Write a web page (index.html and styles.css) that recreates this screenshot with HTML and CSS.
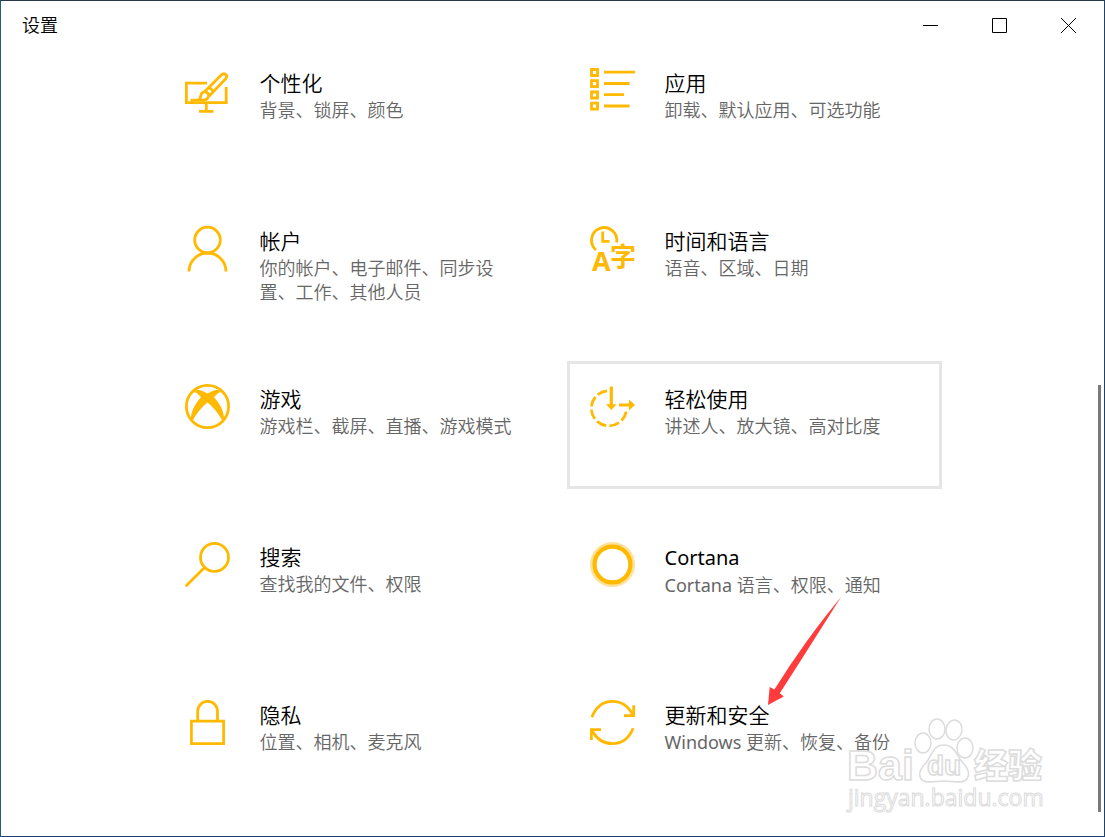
FILE: index.html
```html
<!DOCTYPE html>
<html lang="zh-CN">

<head>
    <meta charset="UTF-8" />
    <meta name="viewport" content="width=device-width, initial-scale=1.0" />
    <title>设置</title>
    <link rel="stylesheet" href="styles.css">
</head>

<body>
    <div class="window">
        <header class="titlebar">
            <h1>设置</h1>
            <div class="window-buttons">
                <button type="button" aria-label="最小化">
                    <svg viewBox="0 0 15 15"><path d="M0 7.5h15" /></svg>
                </button>
                <button type="button" aria-label="最大化">
                    <svg viewBox="0 0 15 15"><path d="M.5.5h14v14H.5z" /></svg>
                </button>
                <button type="button" aria-label="关闭">
                    <svg viewBox="0 0 15 15"><path d="M0 0l15 15M15 0L0 15" /></svg>
                </button>
            </div>
        </header>

        <main class="categories">
            <a class="tile" href="#personalization">
                <svg class="icon" viewBox="0 0 45 45">
                    <path d="M22 15.2H1.4v19.4h39.8V19" />
                    <path d="M21.3 35v8M14 43.3h14.5" />
                    <path d="M5.5 32.2H18c3.5 0 6.2-2.4 5.6-5.5-.5-2.6-3.9-3.7-6.2-2-2.4 1.8-.8 5-3.7 7.2" />
                    <path d="M19.8 23.5L36.5 6.8c3-2.8 7 1 4.2 4L24.2 28M24 19l4.5 4.5" />
                </svg>
                <div class="tile-text">
                    <h2>个性化</h2>
                    <p>背景、锁屏、颜色</p>
                </div>
            </a>

            <a class="tile" href="#apps">
                <svg class="icon" viewBox="0 0 45 45">
                    <path d="M1.5 1.5h6v6h-6zM1.5 12.7h6v6h-6zM1.5 24h6v6h-6zM1.5 35.2h6v6h-6z" />
                    <path d="M14 4.2h31M14 15.5h25.5M14 26.7h20M14 38h25.5" />
                </svg>
                <div class="tile-text">
                    <h2>应用</h2>
                    <p>卸载、默认应用、可选功能</p>
                </div>
            </a>

            <a class="tile" href="#accounts">
                <svg class="icon" viewBox="0 0 45 45">
                    <circle cx="22.5" cy="14" r="12.8" />
                    <path d="M4 45.5a18.5 18.5 0 0 1 37 0" />
                </svg>
                <div class="tile-text">
                    <h2>帐户</h2>
                    <p>你的帐户、电子邮件、同步设置、工作、其他人员</p>
                </div>
            </a>

            <a class="tile" href="#time">
                <svg class="icon" viewBox="0 0 45 45">
                    <path d="M6 24A12.7 12.7 0 1 1 26.7 16.5" />
                    <path d="M12.7 5.5v9.8h6.8" />
                    <text class="glyph-latin" x="2" y="45">A</text>
                    <text class="glyph-han" x="20" y="40">字</text>
                </svg>
                <div class="tile-text">
                    <h2>时间和语言</h2>
                    <p>语音、区域、日期</p>
                </div>
            </a>

            <a class="tile" href="#gaming">
                <svg class="icon" viewBox="0 0 45 45">
                    <circle cx="22.5" cy="22.5" r="21.1" />
                    <path class="solid" d="M7.5 8.5C10 7.5 13 9.5 16 13.3 10 20 5.5 28 6 36l1.5 1C11 30 17 23 22.5 18.5 28 23 34 30 37.5 37l1.5-1C39.5 28 35 20 29 13.3c3-3.8 6-5.8 8.5-4.8C34 4 28 6 22.5 9.5 17 6 11 4 7.5 8.5z" />
                </svg>
                <div class="tile-text">
                    <h2>游戏</h2>
                    <p>游戏栏、截屏、直播、游戏模式</p>
                </div>
            </a>

            <a class="tile hovered" href="#ease-of-access">
                <svg class="icon" viewBox="0 0 45 45">
                    <path stroke-dasharray="10.2 3.2" d="M17 6.8A17.6 17.6 0 1 0 36.3 27" />
                    <path stroke-width="3.2" d="M21.3 2.5V22M29 21h12" />
                    <path class="solid" d="M16 20.3h10.6l-5.3 5.7zM39 15.5l6 5.5-6 5.5z" />
                </svg>
                <div class="tile-text">
                    <h2>轻松使用</h2>
                    <p>讲述人、放大镜、高对比度</p>
                </div>
            </a>

            <a class="tile" href="#search">
                <svg class="icon" viewBox="0 0 45 45">
                    <circle cx="29.5" cy="15.4" r="14" />
                    <path stroke-linecap="round" d="M19.3 25.7L1.5 43.5" />
                </svg>
                <div class="tile-text">
                    <h2>搜索</h2>
                    <p>查找我的文件、权限</p>
                </div>
            </a>

            <a class="tile" href="#cortana">
                <svg class="icon" viewBox="0 0 45 45">
                    <circle class="halo" cx="22.5" cy="22.5" r="20.7" />
                    <circle class="ring" cx="22.5" cy="22.5" r="17.9" />
                </svg>
                <div class="tile-text">
                    <h2><span class="latin">Cortana</span></h2>
                    <p><span class="latin">Cortana</span> 语言、权限、通知</p>
                </div>
            </a>

            <a class="tile" href="#privacy">
                <svg class="icon" viewBox="0 0 45 45">
                    <path d="M6.4 21.1h32.2v22.5H6.4z" />
                    <path d="M12.7 21v-9.7a9.9 9.9 0 0 1 19.8 0V21" />
                </svg>
                <div class="tile-text">
                    <h2>隐私</h2>
                    <p>位置、相机、麦克风</p>
                </div>
            </a>

            <a class="tile" href="#update">
                <svg class="icon" viewBox="0 0 45 45">
                    <path d="M1.8 17.2C6 7 13.5 1.4 22.5 1.4S38.5 6.5 42.8 15" />
                    <path d="M43.7 5.3v10.4H34" />
                    <path d="M1.4 40V29.6H11" />
                    <path d="M2 30.5c4.5 8.5 11.5 13.1 20.5 13.1S39 38.5 43.2 28.3" />
                </svg>
                <div class="tile-text">
                    <h2>更新和安全</h2>
                    <p><span class="latin">Windows</span> 更新、恢复、备份</p>
                </div>
                <svg class="arrow" viewBox="0 0 80 112" aria-hidden="true">
                    <path d="M3 110L4.7 92l4.7 2.5Q41 44 76 2 49 45 14.8 98.2l4 3.2z" />
                </svg>
            </a>
        </main>

        <div class="scrollbar"></div>

        <svg class="watermark" viewBox="0 0 204 104" aria-hidden="true">
            <ellipse cx="79" cy="28" rx="8" ry="10" />
            <ellipse cx="93" cy="14" rx="8" ry="10" />
            <ellipse cx="110" cy="15" rx="8" ry="10" transform="rotate(10 110 15)" />
            <ellipse cx="121" cy="33" rx="8" ry="10" />
            <path d="M100 30c-12 0-12 12-19 19-8 8-7 18 4 18 6 0 9-1 15-1s9 1 15 1c11 0 12-10 5-18-7-7-9-19-20-19z" />
            <text class="wm-brand" x="3" y="65">Bai</text>
            <text class="wm-du" x="83" y="60">du</text>
            <text class="wm-han" x="130" y="63">经验</text>
            <text class="wm-url" x="4" y="91">jingyan.baidu.com</text>
        </svg>
    </div>
</body>

</html>
```
FILE: styles.css
```css
:root {
    --accent: #ffb900;
    --text-color: #000000;
    --muted: #666666;
    --hover-border: #e6e6e6;
}

* {
    margin: 0;
    padding: 0;
    box-sizing: border-box;
}

body {
    background: #ffffff;
    color: var(--text-color);
    font-family: "Noto Sans", "Noto Sans CJK SC", sans-serif;
}

.window {
    position: relative;
    min-height: 100vh;
    border: 1px solid #1d4468;
    border-top-color: #26384e;
    border-left-color: #1b5f7c;
    overflow: hidden;
}

.titlebar {
    display: flex;
    justify-content: space-between;
    align-items: center;
    height: 44px;
    padding: 4px 1px 0 21px;
}

.titlebar h1 {
    font-size: 18px;
    font-weight: 350;
    line-height: 24px;
}

.window-buttons {
    display: flex;
}

.window-buttons button {
    display: flex;
    justify-content: center;
    align-items: center;
    width: 69px;
    height: 38px;
    background: none;
    border: none;
}

.window-buttons svg {
    width: 15px;
    height: 15px;
    fill: none;
    stroke: #000000;
}

.categories {
    display: grid;
    grid-template-columns: repeat(2, minmax(0, 375px));
    grid-auto-rows: minmax(128px, auto);
    gap: 30px;
    justify-content: center;
    padding: 0 2px 24px 0;
}

.tile {
    position: relative;
    display: flex;
    align-items: flex-start;
    gap: 30px;
    padding: 20px;
    border: 3px solid transparent;
    color: inherit;
    text-decoration: none;
}

.tile:hover,
.tile.hovered {
    border-color: var(--hover-border);
}

.tile-text {
    flex: 1;
}

.tile h2 {
    font-size: 21px;
    font-weight: 350;
    line-height: 30px;
}

.tile p {
    font-size: 18px;
    font-weight: 350;
    line-height: 24px;
    color: var(--muted);
}

.latin {
    font-weight: 400;
}

.tile h2 .latin {
    font-size: 20px;
}

.icon {
    flex: none;
    width: 45px;
    height: 45px;
    overflow: visible;
    fill: none;
    stroke: var(--accent);
    stroke-width: 2.8;
}

.icon .solid,
.icon text {
    fill: var(--accent);
    stroke: none;
}

.glyph-latin {
    font: 700 27px "Open Sans", sans-serif;
}

.glyph-han {
    font: 700 26px "Noto Sans CJK SC", sans-serif;
}

.halo {
    stroke: #ffe199;
    stroke-width: 3.6;
}

.ring {
    stroke-width: 4.2;
}

.arrow {
    position: absolute;
    top: -85px;
    left: 195px;
    width: 80px;
    height: 112px;
    fill: #ff3b3b;
}

.scrollbar {
    position: absolute;
    top: 46%;
    right: 3px;
    bottom: 24px;
    width: 3px;
    background: #7a7a7a;
}

.watermark {
    position: absolute;
    right: 56px;
    bottom: 17px;
    width: 204px;
    height: 104px;
    fill: rgba(255, 255, 255, 0.8);
    stroke: #dcdcdc;
    stroke-width: 1.5;
    pointer-events: none;
}

.wm-brand {
    font: 700 43px "Liberation Sans", sans-serif;
}

.wm-du {
    font: 700 28px "Liberation Sans", sans-serif;
}

.wm-han {
    font: 900 34px "Noto Sans CJK SC", sans-serif;
}

.wm-url {
    font: 400 23px "Open Sans", sans-serif;
    stroke-width: 1;
}
```
